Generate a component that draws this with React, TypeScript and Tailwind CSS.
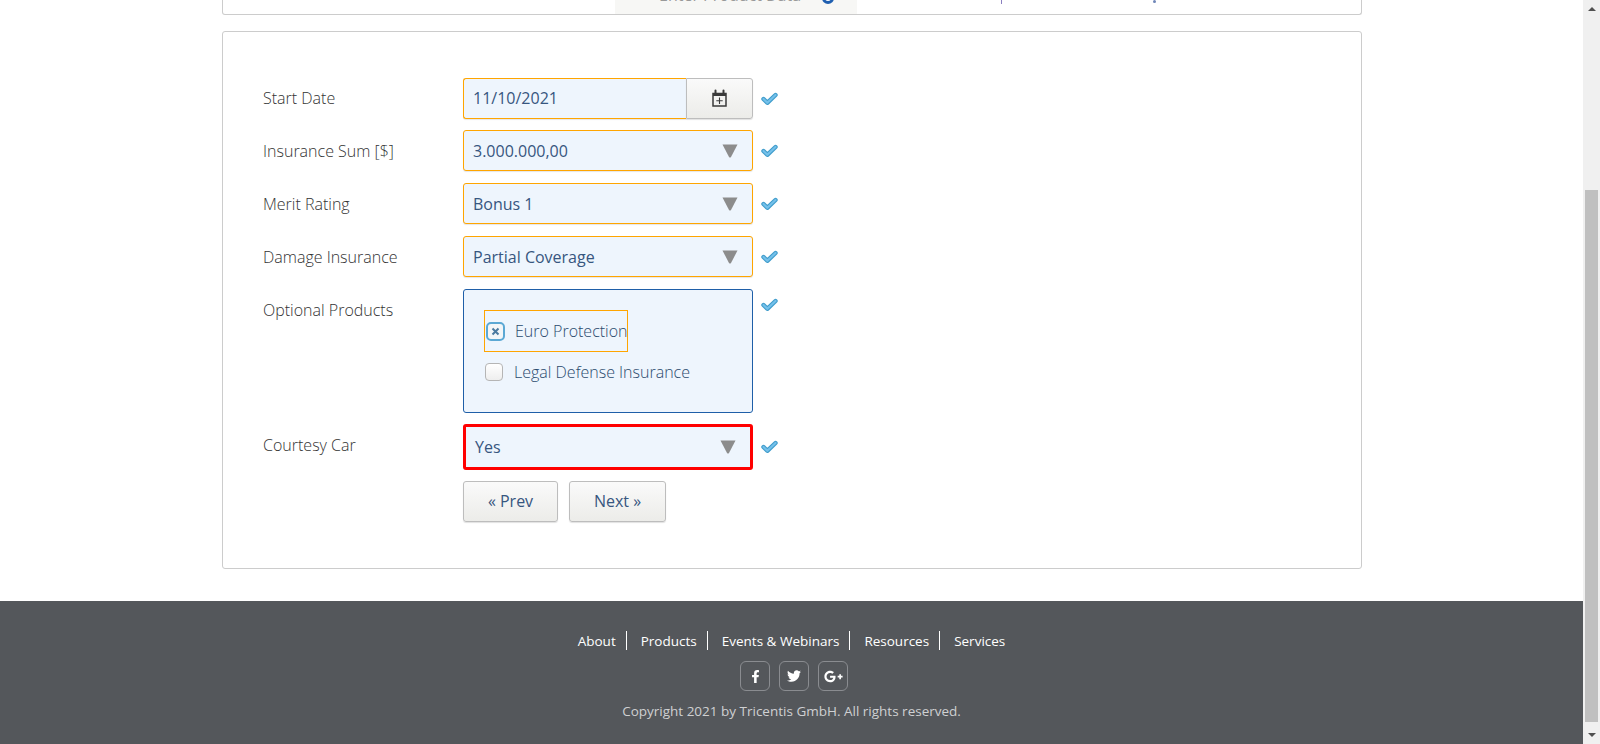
import { FaFacebookF, FaTwitter, FaGooglePlusG } from "react-icons/fa";

const inputBox = "h-[41px] w-[290px] rounded-[3px] border border-[#ffa500] bg-[#eef5fd] text-[16px] text-[#37567f] shadow-[0_1px_1px_rgba(0,0,0,0.1)] flex items-center";

const Check = () => (
  <svg width="17" height="14" viewBox="0 0 17 14" className="ml-[8px] shrink-0">
    <path d="M2.5 7 L6.3 10.8 L14.5 3" fill="none" stroke="#3f9ccb" strokeWidth="4.4" strokeLinecap="round" strokeLinejoin="round" />
    <path d="M2.5 7 L6.3 10.8 L14.5 3" fill="none" stroke="#74c0ea" strokeWidth="2.2" strokeLinecap="round" strokeLinejoin="round" />
  </svg>
);

const Arrow = () => (
  <svg width="16" height="14" viewBox="0 0 16 14" className="shrink-0">
    <path d="M0.5 0.5 H15.5 L9 13 Q8 14 7 13 Z" fill="#8c8c8c" />
  </svg>
);

const Row = ({ label, children, mb = "mb-[11px]", pt = "pt-[9px]" }: { label: string; children: React.ReactNode; mb?: string; pt?: string }) => (
  <div className={`flex items-start ${mb}`}>
    <div className={`w-[240px] ${pt} pl-[40px] shrink-0 text-[16px] leading-[24px] font-light text-[#333]`}>{label}</div>
    {children}
  </div>
);

const SelectRow = ({ label, value, mb }: { label: string; value: string; mb?: string }) => (
  <Row label={label} mb={mb}>
    <div className="flex items-center">
      <div className={`${inputBox} justify-between pl-[9px] pr-[14px]`}>
        <span>{value}</span>
        <Arrow />
      </div>
      <Check />
    </div>
  </Row>
);

const Btn = ({ label, w }: { label: string; w: string }) => (
  <button className={`${w} h-[41px] pb-[2px] rounded-[3px] border border-[#bdbdbd] bg-gradient-to-b from-[#fafafa] to-[#ecece9] shadow-[0_1px_1px_rgba(0,0,0,0.12)] text-[16px] text-[#37567f]`}>
    {label}
  </button>
);

const navItems = ["About", "Products", "Events & Webinars", "Resources", "Services"];

export default function App() {
  return (
    <div className="flex h-[744px] w-full overflow-hidden bg-white font-['Open_Sans',sans-serif]">
      <div className="flex-1 flex flex-col min-w-0">
        <main className="flex-1 pl-[222px] pr-[221px]">
          {/* previous panel, scrolled mostly out of view */}
          <div className="h-[15px] border border-t-0 border-[#cccccc] rounded-b-[3px] overflow-hidden flex">
            <div className="ml-[392px] w-[242px] h-[14px] bg-[#f7f7f5] overflow-hidden flex pl-[44px]">
              <div className="flex items-center gap-[21px] -mt-[15px] h-[20px] text-[16px] whitespace-nowrap text-[#999]">
                <span>Enter Product Data</span>
                <span className="w-[12px] h-[12px] mt-[6px] rounded-full border-[3px] border-[#1f5fb0] bg-white shrink-0" />
              </div>
            </div>
            <div className="ml-[144px] w-px h-[4px] bg-[#8a7fc0]" />
            <div className="ml-[151px] w-[3px] h-[3px] rounded-full bg-[#6f86b8]" />
          </div>
          <div className="mt-[16px] h-[538px] border border-[#cccccc] rounded-[3px] pt-[46px]">
            <Row label="Start Date" pt="pt-[8px]">
              <div className="flex items-center">
                <div className="flex h-[41px] w-[290px]">
                  <div className={`${inputBox} !w-[223px] !rounded-r-none !border-r-0 pl-[9px] pb-[1px]`}>11/10/2021</div>
                  <div className="w-[67px] h-[41px] pb-[2px] flex items-center justify-center rounded-r-[3px] border border-[#bdbdbd] bg-gradient-to-b from-[#fafafa] to-[#ecece9] shadow-[0_1px_1px_rgba(0,0,0,0.12)]">
                    <svg width="15" height="18" viewBox="0 0 15 18">
                      <path d="M1 4.5 H14 V17 H1 Z" fill="none" stroke="#3a3a3a" strokeWidth="1.5" />
                      <path d="M1 4 H14 V7 H1 Z" fill="#3a3a3a" />
                      <path d="M3.5 1.5 V5 M11.5 1.5 V5" stroke="#3a3a3a" strokeWidth="2" strokeLinecap="round" fill="none" />
                      <path d="M7.5 8.5 V15 M4.3 11.8 H10.7" stroke="#3a3a3a" strokeWidth="1.1" fill="none" />
                    </svg>
                  </div>
                </div>
                <Check />
              </div>
            </Row>
            <SelectRow label="Insurance Sum [$]" value="3.000.000,00" mb="mb-[12px]" />
            <SelectRow label="Merit Rating" value="Bonus 1" mb="mb-[12px]" />
            <SelectRow label="Damage Insurance" value="Partial Coverage" mb="mb-[12px]" />
            <Row label="Optional Products">
              <div className="flex items-start">
                <div className="h-[124px] w-[290px] rounded-[3px] border border-[#1f5fa8] bg-[#eef5fd] pt-[20px] pl-[20px] font-light text-[16px] text-[#2a4a6d]">
                  <div className="flex items-center w-[144px] h-[42px] border border-[#ffa500] pl-[1px]">
                    <span className="w-[19px] h-[19px] rounded-[5px] border-2 border-[#5ba8d4] bg-[#f3f6f8] flex items-center justify-center shrink-0">
                      <svg width="9" height="9" viewBox="0 0 9 9">
                        <path d="M1.5 1.5 L7.5 7.5 M7.5 1.5 L1.5 7.5" stroke="#4a7aa0" strokeWidth="2" />
                      </svg>
                    </span>
                    <span className="ml-[10px] whitespace-nowrap">Euro Protection</span>
                  </div>
                  <div className="flex items-center mt-[4px] h-[32px]">
                    <span className="w-[18px] h-[18px] ml-[1px] rounded-[4px] border border-[#b5b5b5] bg-gradient-to-b from-white to-[#eeeeee] shrink-0" />
                    <span className="ml-[11px] whitespace-nowrap">Legal Defense Insurance</span>
                  </div>
                </div>
                <div className="mt-[9px]"><Check /></div>
              </div>
            </Row>
            <Row label="Courtesy Car">
              <div className="flex items-center">
                <div className="h-[46px] w-[290px] rounded-[3px] border-[3px] border-[#ff0000] bg-[#eef5fd] text-[16px] text-[#37567f] flex items-center justify-between pl-[9px] pr-[14px]">
                  <span>Yes</span>
                  <Arrow />
                </div>
                <Check />
              </div>
            </Row>
            <div className="flex gap-[11px] ml-[240px]">
              <Btn label="« Prev" w="w-[95px]" />
              <Btn label="Next »" w="w-[97px]" />
            </div>
          </div>
        </main>
        <footer className="h-[143px] bg-[#54575b] flex flex-col items-center pt-[30px]">
          <ul className="flex -ml-[4px] text-[13.5px] text-white">
            {navItems.map((item, i) => (
              <li key={item} className={`h-[19px] leading-[21px] pl-[14px] pr-[10px] ${i < navItems.length - 1 ? "border-r border-white" : ""}`}>
                {item}
              </li>
            ))}
          </ul>
          <div className="flex gap-[9px] mt-[11px] ml-[5px] text-white">
            <span className="w-[30px] h-[30px] rounded-[6px] border border-[#8a8c90] flex items-center justify-center"><FaFacebookF size={13} /></span>
            <span className="w-[30px] h-[30px] rounded-[6px] border border-[#8a8c90] flex items-center justify-center"><FaTwitter size={14} /></span>
            <span className="w-[30px] h-[30px] rounded-[6px] border border-[#8a8c90] flex items-center justify-center"><FaGooglePlusG size={19} /></span>
          </div>
          <p className="mt-[11px] text-[13.5px] leading-[19px] text-[#cfd0d2]">Copyright 2021 by Tricentis GmbH. All rights reserved.</p>
        </footer>
      </div>
      {/* browser scrollbar */}
      <div className="w-[17px] shrink-0 bg-[#f0f0f0] flex flex-col items-center">
        <svg width="8" height="4" viewBox="0 0 8 4" className="mt-[7px]"><path d="M4 0 L8 4 H0 Z" fill="#505050" /></svg>
        <div className="w-[13px] h-[532px] mt-[179px] bg-[#c0c0c0]" />
        <svg width="8" height="4" viewBox="0 0 8 4" className="mt-[11px]"><path d="M0 0 H8 L4 4 Z" fill="#505050" /></svg>
      </div>
    </div>
  );
}
